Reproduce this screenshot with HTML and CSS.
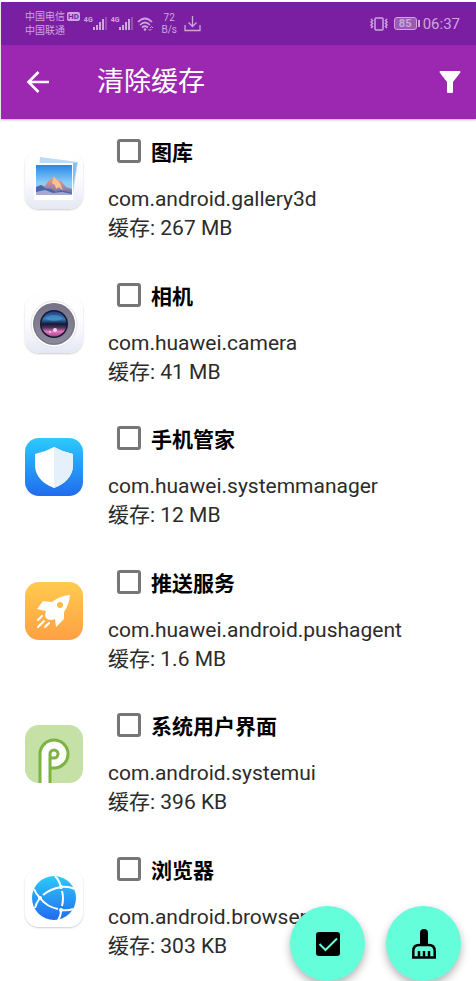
FILE: index.html
```html
<!DOCTYPE html>
<html lang="zh-CN">
<head>
	<meta charset="UTF-8">
	<meta name="viewport" content="width=device-width, initial-scale=1">
	<title>清除缓存</title>
	<link rel="stylesheet" href="styles.css">
</head>
<body>
	<header>
		<!-- phone status bar -->
		<div class="statusBar">
			<div class="carriers">
				<div class="carrier">中国电信 <span class="hd">HD</span></div>
				<div class="carrier">中国联通</div>
			</div>
			<div class="signal">
				<span class="netType">4G</span>
				<svg width="14" height="13" viewBox="0 0 14 13"><path d="M0 10h2v3H0zM3 8h2v5H3zM6 5h2v8H6zM9 2h2v11H9z" fill="currentColor"/><path d="M12 0h2v13h-2z" fill="currentColor" opacity=".35"/></svg>
			</div>
			<div class="signal">
				<span class="netType">4G</span>
				<svg width="14" height="13" viewBox="0 0 14 13"><path d="M0 10h2v3H0zM3 8h2v5H3zM6 5h2v8H6zM9 2h2v11H9z" fill="currentColor"/><path d="M12 0h2v13h-2z" fill="currentColor" opacity=".35"/></svg>
			</div>
			<svg width="17" height="14" viewBox="0 0 17 14" fill="none" stroke="currentColor" stroke-width="1.7">
				<path d="M1 5Q8 -2 15 5M3 8Q8 3 13 8M5 10.500Q8 8 11 10.500"/>
				<circle cx="8" cy="12.500" r="1.300" fill="currentColor" stroke="none"/>
				<path d="M13 11l1.500 -1.500L16 11M11.500 12l1.500 1.500l1.500 -1.500" stroke-width="1"/>
			</svg>
			<div class="speed"><span>72</span><span>B/s</span></div>
			<svg width="17" height="16" viewBox="0 0 17 16" fill="none" stroke="currentColor" stroke-width="1.300"><path d="M8.500 0v10M4.500 6.500l4 4l4 -4M1 9v5.500h15V9"/></svg>
			<div class="statusRight">
				<svg width="18" height="14" viewBox="0 0 18 14" fill="none" stroke="currentColor" stroke-width="1.500"><rect x="5" y="1" width="8" height="12" rx="1"/><path d="M1 2l1.500 1.500L1 5l1.500 1.500L1 8l1.500 1.500L1 11M17 2l-1.500 1.500L17 5l-1.500 1.500L17 8l-1.500 1.500L17 11"/></svg>
				<span class="battery">85</span>
				<span class="clock">06:37</span>
			</div>
		</div>
		<div class="appBar">
			<button class="iconButton" aria-label="返回">
				<svg width="24" height="24" viewBox="0 0 24 24" fill="none" stroke="#fff" stroke-width="2.600"><path d="M23 12H3M12.500 2L2.500 12l10 10"/></svg>
			</button>
			<h1>清除缓存</h1>
			<button class="iconButton" aria-label="筛选">
				<svg width="22" height="24" viewBox="0 0 22 24" fill="#fff"><path d="M1 1h20q1 1 0 2l-7 9v10q0 1-1 1H9q-1 0-1-1V12L1 3q-1-1 0-2z"/></svg>
			</button>
		</div>
	</header>

	<main>
		<ul class="appList">
			<li class="appItem">
				<svg class="appIcon light" viewBox="0 0 58 58">
					<defs>
						<linearGradient id="paper" x2="0" y2="1"><stop stop-color="#fff"/><stop offset=".5" stop-color="#fcfcff"/><stop offset="1" stop-color="#e5e7f3"/></linearGradient>
						<linearGradient id="sky" x2="0" y2="1"><stop stop-color="#2887e8"/><stop offset=".6" stop-color="#8ccdf6"/></linearGradient>
						<linearGradient id="peak" x2="0" y2="1"><stop stop-color="#f6a36f"/><stop offset=".5" stop-color="#b48b9e"/><stop offset="1" stop-color="#586fae"/></linearGradient>
					</defs>
					<rect width="58" height="58" rx="14" fill="url(#paper)"/>
					<path d="M15 6l38 5l-5 31l-36 -4z" fill="#b9dcfb"/>
					<path d="M48 12l4 0l-4 23z" fill="#85bdf0"/>
					<rect x="9" y="12" width="39" height="37" fill="#fff"/>
					<rect x="11" y="14" width="36" height="30" fill="url(#sky)"/>
					<path d="M11 37l5 -3l4 1l4 -6l3 -1l2 -3l4 5l3 0l5 6l6 2v6H11z" fill="url(#peak)"/>
					<path d="M11 36l5 -2l4 3l6 1l5 3l5 -2l11 3v2H11z" fill="#4867ab"/>
					<path d="M11 41l9 -2l8 3l9 -1l10 2v1H11z" fill="#a5a9d2"/>
					<path d="M29 26l-2 6l3 2l1 4l3 -2l4 4l-3 -8z" fill="#ffc092"/>
				</svg>
				<div class="appInfo">
					<label class="appName"><input type="checkbox">图库</label>
					<p>com.android.gallery3d</p>
					<p>缓存: 267 MB</p>
				</div>
			</li>
			<li class="appItem">
				<svg class="appIcon light" viewBox="0 0 58 58">
					<defs>
						<linearGradient id="ring" x2="0" y2="1"><stop stop-color="#777287"/><stop offset="1" stop-color="#8c8b9c"/></linearGradient>
						<linearGradient id="lens" x2="0" y2="1"><stop stop-color="#253b83"/><stop offset=".3" stop-color="#367ebd"/><stop offset=".5" stop-color="#111936"/><stop offset=".65" stop-color="#52345f"/><stop offset=".8" stop-color="#e078bd"/><stop offset="1" stop-color="#a94591"/></linearGradient>
					</defs>
					<rect width="58" height="58" rx="14" fill="url(#paper)"/>
					<circle cx="29" cy="29" r="23" fill="#fff" stroke="#e3e3ec"/>
					<circle cx="29" cy="29" r="21" fill="url(#ring)"/>
					<circle cx="29" cy="29" r="20" fill="none" stroke="#77738a"/>
					<circle cx="29" cy="29" r="14" fill="#171832"/>
					<circle cx="29" cy="29" r="12.500" fill="url(#lens)"/>
					<ellipse cx="29" cy="23" rx="8" ry="3" fill="#5baee0" opacity=".4"/>
					<circle cx="30" cy="35" r="2" fill="#ffd2f3"/>
					<circle cx="25" cy="37" r="1" fill="#ffc5e6"/>
				</svg>
				<div class="appInfo">
					<label class="appName"><input type="checkbox">相机</label>
					<p>com.huawei.camera</p>
					<p>缓存: 41 MB</p>
				</div>
			</li>
			<li class="appItem">
				<svg class="appIcon" viewBox="0 0 58 58">
					<defs><linearGradient id="blue" x2="0" y2="1"><stop stop-color="#2bcbfb"/><stop offset="1" stop-color="#216bef"/></linearGradient></defs>
					<rect width="58" height="58" rx="14" fill="url(#blue)"/>
					<path d="M29 9Q38 14 48 16V28Q47 43 29 50Q11 43 10 28V16Q20 14 29 9z" fill="#fff"/>
					<path d="M29 9Q38 14 48 16V28Q47 43 29 50z" fill="#e4f1fa"/>
				</svg>
				<div class="appInfo">
					<label class="appName"><input type="checkbox">手机管家</label>
					<p>com.huawei.systemmanager</p>
					<p>缓存: 12 MB</p>
				</div>
			</li>
			<li class="appItem">
				<svg class="appIcon" viewBox="0 0 58 58">
					<defs><linearGradient id="orange" x2="0" y2="1"><stop stop-color="#ffcb4e"/><stop offset="1" stop-color="#ffa044"/></linearGradient></defs>
					<rect width="58" height="58" rx="14" fill="url(#orange)"/>
					<path d="M45 13Q34 14 27 20L18 19L12 27L21 29Q19 34 22 37Q26 39 30 37L31 45L39 37V30Q44 23 45 13z" fill="#fff"/>
					<circle cx="35" cy="23" r="3" fill="#ffb947"/>
					<path d="M17 34l-4 4M19 39l-6 6M24 41l-4 4" stroke="#fff" stroke-width="2" stroke-linecap="round"/>
				</svg>
				<div class="appInfo">
					<label class="appName"><input type="checkbox">推送服务</label>
					<p>com.huawei.android.pushagent</p>
					<p>缓存: 1.6 MB</p>
				</div>
			</li>
			<li class="appItem">
				<svg class="appIcon" viewBox="0 0 58 58">
					<rect width="58" height="58" rx="14" fill="#c5e1a5"/>
					<path d="M15 58V29a14 14 0 1 1 14 14H26V58z" fill="#fff"/>
					<path d="M15 58V29a14 14 0 1 1 14 14H26M25 58V29a4 4 0 1 1 4 4H25" fill="none" stroke="#7cb342" stroke-width="3"/>
				</svg>
				<div class="appInfo">
					<label class="appName"><input type="checkbox">系统用户界面</label>
					<p>com.android.systemui</p>
					<p>缓存: 396 KB</p>
				</div>
			</li>
			<li class="appItem">
				<svg class="appIcon light" viewBox="0 0 58 58">
					<rect width="58" height="58" rx="14" fill="#fff"/>
					<circle cx="29" cy="29" r="22" fill="url(#blue)"/>
					<path d="M9 20Q11 25 15 29M18 26Q25 20 36 18M36 18Q43 17 50 20M36 18Q34 11 30 7M37 22Q39 29 37 37M15 29Q22 38 33 40M36 41Q43 42 48 40M36 41Q36 47 33 51M15 29Q11 34 10 39" fill="none" stroke="#fff" stroke-width="2"/>
					<circle cx="15" cy="29" r="2" fill="#fff"/><circle cx="36" cy="18" r="2" fill="#fff"/><circle cx="36" cy="41" r="2" fill="#fff"/>
				</svg>
				<div class="appInfo">
					<label class="appName"><input type="checkbox">浏览器</label>
					<p>com.android.browser</p>
					<p>缓存: 303 KB</p>
				</div>
			</li>
		</ul>
	</main>

	<!-- select all / clean -->
	<div class="actions">
		<button class="fab" aria-label="全选">
			<svg width="24" height="24" viewBox="0 0 24 24"><rect width="24" height="24" rx="3"/><path d="M3.500 12l6 6L21 6.500" fill="none" stroke="#64ffda" stroke-width="2"/></svg>
		</button>
		<button class="fab" aria-label="清理">
			<svg width="24" height="30" viewBox="0 0 24 30"><path d="M8 16V4q0-4 4-4t4 4v12z"/><path d="M1.300 28.500V22q0-6 6-6h9.400q6 0 6 6v6.500zM7 28v-6M12 28v-6M17 28v-6" fill="none" stroke="#000" stroke-width="2.500"/></svg>
		</button>
	</div>
</body>
</html>
```
FILE: styles.css
```css
* {
	box-sizing: border-box;
}
body {
	margin: 0;
	padding: 2px 0 0 1px;
	background-color: #fff;
	color: #2b2b2b;
	font-family: Roboto, "Noto Sans CJK SC", sans-serif;
}
button {
	border: none;
	padding: 0;
	background: none;
}
svg {
	display: block;
	flex: none;
}
header {
	box-shadow: 0 1px 2px rgba(0, 0, 0, 0.3);
}

/* status bar */
.statusBar {
	display: flex;
	align-items: center;
	gap: 4px;
	height: 43px;
	padding: 0 16px 0 24px;
	background-color: #7b1fa2;
	color: #cda6dc;
}
.carrier {
	display: flex;
	align-items: center;
	gap: 2px;
	font-size: 10px;
	line-height: 14px;
}
.hd {
	padding: 0 1px;
	border-radius: 2px;
	background-color: #cda6dc;
	color: #7b1fa2;
	font-size: 8px;
	font-weight: bold;
	line-height: 9px;
}
.signal {
	display: flex;
}
.netType {
	font-size: 7px;
	font-weight: bold;
	line-height: 7px;
}
.speed {
	display: flex;
	flex-direction: column;
	align-items: center;
	margin: 0 3px;
	font-size: 10px;
	line-height: 12px;
}
.statusRight {
	display: flex;
	align-items: center;
	gap: 6px;
	margin-left: auto;
}
.battery {
	position: relative;
	width: 23px;
	border: 1px solid #cda6dc;
	border-radius: 3px;
	background-color: #9c59b8;
	font-size: 11px;
	font-weight: bold;
	line-height: 11px;
	text-align: center;
}
.battery::after {
	content: "";
	position: absolute;
	top: 2px;
	right: -4px;
	width: 2px;
	height: 7px;
	background-color: #cda6dc;
}
.clock {
	font-size: 15px;
}

/* title bar */
.appBar {
	display: flex;
	align-items: center;
	height: 74px;
	padding: 0 15px 0 25px;
	background-color: #9c27b0;
}
.appBar h1 {
	flex: 1;
	margin: 0 0 0 47px;
	color: #fff;
	font-size: 27px;
	font-weight: 400;
	line-height: 44px;
}

/* list of apps */
.appList {
	margin: 0;
	padding: 0;
	list-style-type: none;
}
.appItem {
	display: flex;
	align-items: flex-start;
	gap: 25px;
	padding: 12px 24px 20px;
}
.appItem:nth-child(even) {
	padding-bottom: 19px;
}
.appItem:last-child {
	padding-bottom: 12px;
}
.appIcon {
	width: 58px;
	height: 58px;
	margin-top: 20px;
}
.light {
	border-radius: 14px;
	box-shadow: 0 1px 2px rgba(0, 0, 0, 0.2);
}
.appInfo p {
	margin: 0;
	font-size: 21px;
	line-height: 29px;
}
.appName {
	display: flex;
	align-items: center;
	gap: 10px;
	height: 40px;
	margin: 0 0 14px 9px;
	color: #000;
	font-size: 21px;
	font-weight: bold;
}
.appName input {
	appearance: none;
	width: 24px;
	height: 24px;
	margin: 0;
	border: 3px solid #767676;
	border-radius: 3px;
}
.appName input:checked {
	background-color: #767676;
}

/* floating buttons */
.actions {
	position: fixed;
	right: 15px;
	bottom: 0;
	display: flex;
	gap: 21px;
}
.fab {
	display: flex;
	align-items: center;
	justify-content: center;
	width: 75px;
	height: 75px;
	border-radius: 50%;
	background-color: #64ffda;
	box-shadow: 0 4px 8px rgba(0, 0, 0, 0.3);
}
```
